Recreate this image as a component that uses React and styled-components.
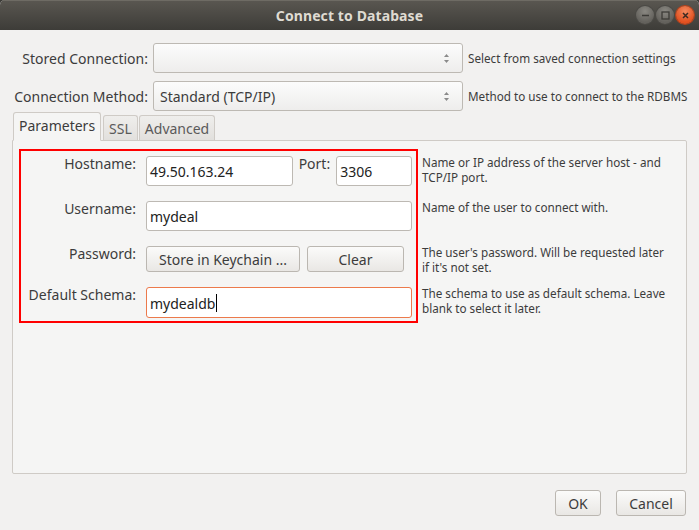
import React from "react";
import styled, {createGlobalStyle} from "styled-components";

const GlobalStyle = createGlobalStyle`
  html, body {
    margin: 0;
    padding: 0;
    background: #3c3b37;
  }

  body {
    font-family: "Noto Sans", "DejaVu Sans", sans-serif;
    color: #3c3c3c;
  }
`

const Window = styled.div`
  display: flex;
  flex-direction: column;
  width: 699px;
  height: 530px;
  background: #f2f1f0;
  border-radius: 5px 5px 0 0;
  overflow: hidden;
`

const TitleBar = styled.div`
  display: grid;
  grid-template-columns: 1fr auto 1fr;
  align-items: center;
  height: 30px;
  flex-shrink: 0;
  background: linear-gradient(#5a5751, #3d3c38);
  box-shadow: inset 0 1px 0 #6e6b64;
`

const Title = styled.div`
  grid-column: 2;
  color: #dfdbd2;
  font-weight: bold;
  font-size: 14px;
  letter-spacing: 0.1px;
`

const Controls = styled.div`
  grid-column: 3;
  justify-self: end;
  display: flex;
  gap: 2px;
  padding-right: 5px;
`

const CircleButton = styled.div`
  display: flex;
  align-items: center;
  justify-content: center;
  width: 18px;
  height: 18px;
  border-radius: 50%;
  background: ${p => p.close
    ? "radial-gradient(circle at 50% 30%, #f58a5f, #e2501f 70%)"
    : "radial-gradient(circle at 50% 30%, #8a8882, #63615c 70%)"};
  box-shadow: 0 0 0 1px ${p => p.close ? "#b7411a" : "#4a4945"};
`

const Body = styled.div`
  flex: 1;
  display: flex;
  flex-direction: column;
  padding: 13px 12px 14px 12px;
`

const TopGrid = styled.div`
  display: grid;
  grid-template-columns: 136px 310px 1fr;
  column-gap: 5px;
  row-gap: 8px;
  align-items: center;
`

const TopLabel = styled.div`
  text-align: right;
  font-size: 14px;
  white-space: nowrap;
`

const Select = styled.div`
  display: flex;
  align-items: center;
  justify-content: space-between;
  height: 30px;
  box-sizing: border-box;
  padding: 0 12px 0 6px;
  border: 1px solid #bdb9b3;
  border-radius: 3px;
  background: linear-gradient(#fcfcfc, #eeedec);
  font-size: 14px;
  color: #3c3c3c;
`

const Help = styled.div`
  font-size: 11.7px;
  line-height: 15px;
  white-space: nowrap;
  color: #3c3c3c;
  grid-row: ${p => p.row || "auto"};
  grid-column: ${p => p.col || "auto"};
  align-self: ${p => p.top ? "start" : "center"};
  margin-top: ${p => p.top ? "-1px" : "0"};
`

const TabBar = styled.div`
  display: flex;
  align-items: flex-end;
  margin-top: 1px;
  padding-left: 1px;
  height: 28px;
`

const Tab = styled.div`
  position: relative;
  z-index: 1;
  box-sizing: border-box;
  display: flex;
  align-items: center;
  padding: ${p => p.active ? "0 5px 2px 5px" : "0 5px"};
  height: ${p => p.active ? "29px" : "25px"};
  margin-bottom: ${p => p.active ? "-1px" : "0"};
  margin-right: ${p => p.active ? "2px" : "1px"};
  border: 1px solid #cfcbc6;
  border-bottom: ${p => p.active ? "1px solid #f5f5f4" : "none"};
  border-radius: 3px 3px 0 0;
  background: ${p => p.active ? "#f5f5f4" : "linear-gradient(#efeeec, #e2e0dd)"};
  color: ${p => p.active ? "#3c3c3c" : "#5a5a5a"};
  font-size: 14px;
`

const Panel = styled.div`
  flex: 1;
  border: 1px solid #cfcbc6;
  border-radius: 0 2px 2px 2px;
  background: #f5f5f4;
`

const FormGrid = styled.div`
  display: grid;
  grid-template-columns: 115px 266px 1fr;
  grid-template-rows: 30px 30px 26px 31px;
  column-gap: 10px;
  row-gap: 15px;
  padding: 15px 0 0 8px;
`

const Highlight = styled.div`
  grid-column: 1 / 3;
  grid-row: 1 / 5;
  margin: -7px -6px -5px -2px;
  border: 2px solid #ff0000;
  pointer-events: none;
`

const FieldLabel = styled.div`
  grid-column: 1;
  grid-row: ${p => p.row};
  justify-self: end;
  font-size: 14px;
  line-height: 16px;
  white-space: nowrap;
`

const Control = styled.div`
  grid-column: 2;
  grid-row: ${p => p.row};
  display: flex;
  gap: ${p => p.gap || 6}px;
  align-items: stretch;
`

const Field = styled.div`
  display: flex;
  align-items: center;
  box-sizing: border-box;
  width: ${p => p.width ? p.width + "px" : "100%"};
  height: 100%;
  padding: 1px 3px 0 3px;
  border: 1px solid ${p => p.focused ? "#ec7a4c" : "#bdb9b3"};
  border-radius: 3px;
  background: #ffffff;
  font-size: 14px;
  color: #222;
`

const Caret = styled.span`
  display: inline-block;
  width: 1px;
  height: 18px;
  margin-left: 1px;
  background: #000;
`

const InlineLabel = styled.div`
  font-size: 14px;
  line-height: 16px;
  white-space: nowrap;
`

const Button = styled.div`
  display: flex;
  align-items: center;
  justify-content: center;
  box-sizing: border-box;
  width: ${p => p.width}px;
  height: 26px;
  border: 1px solid #bbb7b1;
  border-radius: 3px;
  background: linear-gradient(#fbfbfa, #e9e7e4);
  font-size: 14px;
  color: #3c3c3c;
  white-space: nowrap;
`

const Footer = styled.div`
  display: flex;
  justify-content: flex-end;
  gap: 15px;
  margin-top: 16px;
  padding-right: 1px;
`

const SpinArrows = () => (
    <svg width="7" height="11" viewBox="0 0 7 11">
        <path d="M3.5 1 L6 4 L1 4 Z" fill="#8a8a8a"/>
        <path d="M3.5 10 L6 7 L1 7 Z" fill="#8a8a8a"/>
    </svg>
)

const App = () => {
    return (
        <>
            <GlobalStyle/>
            <Window>
                <TitleBar>
                    <Title>Connect to Database</Title>
                    <Controls>
                        <CircleButton>
                            <svg width="9" height="9" viewBox="0 0 9 9">
                                <path d="M1 4.5 H8" stroke="#3c3b37" strokeWidth="1.5"/>
                            </svg>
                        </CircleButton>
                        <CircleButton>
                            <svg width="9" height="9" viewBox="0 0 9 9">
                                <rect x="1" y="1" width="7" height="7" fill="none" stroke="#3c3b37" strokeWidth="1.3"/>
                            </svg>
                        </CircleButton>
                        <CircleButton close>
                            <svg width="9" height="9" viewBox="0 0 9 9">
                                <path d="M2 2 L7 7 M7 2 L2 7" stroke="#3c2a22" strokeWidth="1.5"/>
                            </svg>
                        </CircleButton>
                    </Controls>
                </TitleBar>

                <Body>
                    <TopGrid>
                        <TopLabel>Stored Connection:</TopLabel>
                        <Select><span></span><SpinArrows/></Select>
                        <Help>Select from saved connection settings</Help>

                        <TopLabel>Connection Method:</TopLabel>
                        <Select><span>Standard (TCP/IP)</span><SpinArrows/></Select>
                        <Help>Method to use to connect to the RDBMS</Help>
                    </TopGrid>

                    <TabBar>
                        <Tab active>Parameters</Tab>
                        <Tab>SSL</Tab>
                        <Tab>Advanced</Tab>
                    </TabBar>

                    <Panel>
                        <FormGrid>
                            <Highlight/>

                            <FieldLabel row={1}>Hostname:</FieldLabel>
                            <Control row={1}>
                                <Field width={147}>49.50.163.24</Field>
                                <InlineLabel>Port:</InlineLabel>
                                <Field width={76}>3306</Field>
                            </Control>
                            <Help row={1} col={3} top>
                                Name or IP address of the server host - and<br/>TCP/IP port.
                            </Help>

                            <FieldLabel row={2}>Username:</FieldLabel>
                            <Control row={2}>
                                <Field>mydeal</Field>
                            </Control>
                            <Help row={2} col={3} top>Name of the user to connect with.</Help>

                            <FieldLabel row={3}>Password:</FieldLabel>
                            <Control row={3} gap={7}>
                                <Button width={154}>Store in Keychain ...</Button>
                                <Button width={97}>Clear</Button>
                            </Control>
                            <Help row={3} col={3} top>
                                The user's password. Will be requested later<br/>if it's not set.
                            </Help>

                            <FieldLabel row={4}>Default Schema:</FieldLabel>
                            <Control row={4}>
                                <Field focused>mydealdb<Caret/></Field>
                            </Control>
                            <Help row={4} col={3} top>
                                The schema to use as default schema. Leave<br/>blank to select it later.
                            </Help>
                        </FormGrid>
                    </Panel>

                    <Footer>
                        <Button width={46}>OK</Button>
                        <Button width={70}>Cancel</Button>
                    </Footer>
                </Body>
            </Window>
        </>
    );
}

export default App;
